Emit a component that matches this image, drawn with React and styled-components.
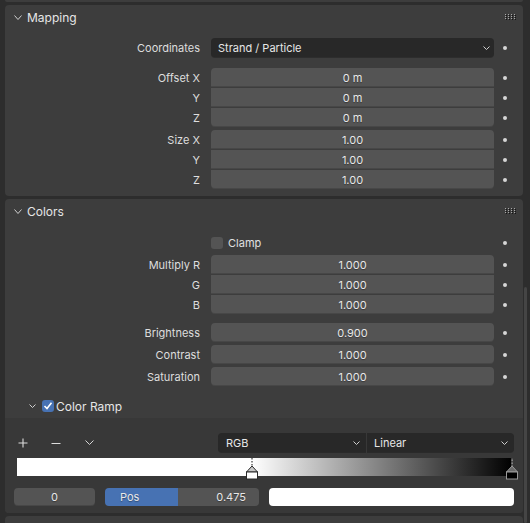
import React from "react";
import styled, { createGlobalStyle } from "styled-components";

const GlobalStyle = createGlobalStyle`
  html, body { margin: 0; padding: 0; }
  body {
    background: #2d2d2d;
    font-family: Inter, "DejaVu Sans", "Liberation Sans", sans-serif;
    font-size: 11px;
    color: #e2e2e2;
  }
  * { box-sizing: border-box; }
`;

const Editor = styled.div`
  position: relative;
  width: 530px;
  height: 523px;
  overflow: hidden;
  display: flex;
  flex-direction: column;
  gap: 3px;
  padding: 0 7px 0 5px;
  background: #2d2d2d;
`;

const PanelTail = styled.div`
  flex: none;
  height: 2px;
  background: #3d3d3d;
  border-radius: 0 0 4px 4px;
`;

const Panel = styled.section`
  flex: none;
  background: #3d3d3d;
  border-radius: 4px;
  overflow: hidden;
  padding-bottom: ${(p) => p.$padBottom ?? 0}px;
  min-height: ${(p) => p.$minH ?? 0}px;
`;

const PanelHeader = styled.header`
  height: 24px;
  display: flex;
  align-items: center;
  padding: 0 7px 0 9px;
  font-size: 12px;
  color: #e6e6e6;
`;

const HeaderTitle = styled.span`
  flex: 1;
  margin-left: 5px;
`;

const Row = styled.div`
  display: grid;
  grid-template-columns: 206px 283px 22px;
  align-items: center;
  height: 19px;
  margin-top: ${(p) => p.$mt || 0}px;
`;

const Label = styled.span`
  justify-self: end;
  padding-right: 11px;
  color: #dedede;
  white-space: nowrap;
`;

const radii = {
  single: "4px",
  first: "4px 4px 0 0",
  mid: "0",
  last: "0 0 4px 4px",
  left: "4px 0 0 4px",
  right: "0 4px 4px 0",
};

const NumField = styled.div`
  height: 19px;
  background: #545454;
  border-radius: ${(p) => radii[p.$pos || "single"]};
  display: flex;
  align-items: center;
  justify-content: center;
  color: #e8e8e8;
  box-shadow: inset 0 -1px 0 rgba(0, 0, 0, 0.15);
  text-shadow: 0 1px 1px rgba(0, 0, 0, 0.35);
`;

const Dropdown = styled.div`
  height: 19px;
  background: #282828;
  border-radius: ${(p) => radii[p.$pos || "single"]};
  display: flex;
  align-items: center;
  justify-content: space-between;
  padding: 0 ${(p) => p.$padR ?? 4}px 0 ${(p) => p.$padL ?? 7}px;
  color: #e6e6e6;
  flex: ${(p) => (p.$grow ? 1 : "none")};
  box-shadow: 0 1px 0 rgba(0, 0, 0, 0.25);
`;

const Dot = styled.span`
  justify-self: center;
  width: 4px;
  height: 4px;
  border-radius: 50%;
  background: #d6d6d6;
`;

const CheckLine = styled.label`
  display: flex;
  align-items: center;
  gap: 5px;
  color: #e0e0e0;
`;

const CheckBox = styled.span`
  width: 12px;
  height: 12px;
  border-radius: 3px;
  background: ${(p) => (p.$on ? "#4772b3" : "#545454")};
  display: flex;
  align-items: center;
  justify-content: center;
  flex: none;
`;

const SubHeader = styled.div`
  height: 24px;
  margin-top: 8px;
  display: flex;
  align-items: center;
  padding-left: 24px;
  gap: 6px;
  color: #e6e6e6;
  font-size: 12px;
`;

const SubTitle = styled.span`
  margin-left: -4px;
`;

const RampBody = styled.div`
  background: #383838;
  padding: 15px 9px 7px 9px;
`;

const ButtonRow = styled.div`
  display: flex;
  align-items: center;
  height: 19px;
`;

const IconButtons = styled.div`
  display: flex;
  gap: 15px;
  flex: 1;
`;

const IconBtn = styled.span`
  width: 18px;
  height: 19px;
  display: flex;
  align-items: center;
  justify-content: center;
`;

const DropGroup = styled.div`
  display: flex;
  width: 296px;
  gap: 1px;
`;

const RampBar = styled.div`
  position: relative;
  height: 18px;
  margin: 6px 2px 0 3px;
`;

const Marker = styled.svg`
  position: absolute;
  top: 0;
  width: 12px;
  height: 22px;
  overflow: visible;
`;

const BottomRow = styled.div`
  display: grid;
  grid-template-columns: 81px 154px 1fr;
  column-gap: 10px;
  margin-top: 12px;
  height: 18px;
`;

const Slider = styled.div`
  height: 18px;
  border-radius: 4px;
  display: flex;
  align-items: center;
  justify-content: space-between;
  padding: 0 13px 0 15px;
  color: #e8e8e8;
  text-shadow: 0 1px 1px rgba(0, 0, 0, 0.35);
`;

const Swatch = styled.div`
  height: 18px;
  border-radius: 4px;
  background: #ffffff;
`;

const Scrollbar = styled.div`
  position: absolute;
  right: 3px;
  top: 287px;
  bottom: 0;
  width: 3px;
  border-radius: 2px;
  background: #454545;
`;

const Chevron = ({ w = 8, h = 5, color = "#cfcfcf" }) => (
  <svg width={w} height={h} viewBox={`0 0 ${w} ${h}`}>
    <polyline
      points={`0.5,0.5 ${w / 2},${h - 0.5} ${w - 0.5},0.5`}
      fill="none"
      stroke={color}
      strokeWidth="1"
    />
  </svg>
);

const DragHandle = () => (
  <svg width="11" height="6" viewBox="0 0 11 6">
    {[0, 3, 6, 9].map((x) =>
      [0, 2, 4].map((y) => (
        <g key={`${x}-${y}`}>
          <rect x={x} y={y} width="1" height="1" fill="#a8a8a8" />
          <rect x={x + 1} y={y + 1} width="1" height="1" fill="#151515" />
        </g>
      ))
    )}
  </svg>
);

const Check = () => (
  <svg width="10" height="10" viewBox="0 0 10 10">
    <polyline points="1.5,5 4,7.5 8.5,1.8" fill="none" stroke="#fff" strokeWidth="1.6" />
  </svg>
);

const PanelHead = ({ title }) => (
  <PanelHeader>
    <Chevron />
    <HeaderTitle>{title}</HeaderTitle>
    <DragHandle />
  </PanelHeader>
);

const FieldRow = ({ label, value, pos, mt }) => (
  <Row $mt={mt}>
    <Label>{label}</Label>
    <NumField $pos={pos}>{value}</NumField>
    <Dot />
  </Row>
);

const RampMarker = ({ pos, active }) => (
  <Marker style={{ left: `calc(${pos * 100}% - 6px)` }} viewBox="0 0 12 22">
    <line x1="6" y1="0" x2="6" y2="8" stroke={active ? "#ffffff" : "#cfcfcf"} strokeWidth="1" />
    <line x1="6" y1="0" x2="6" y2="8" stroke="#111" strokeWidth="1" strokeDasharray="1.5 1.5" />
    <polygon
      points="6,8 0.5,14 11.5,14"
      fill={active ? "#c8c8c8" : "#6a6a6a"}
      stroke={active ? "#2a2a2a" : "#9a9a9a"}
      strokeWidth="1"
    />
    <rect
      x="0.5"
      y="14"
      width="11"
      height="7"
      fill={active ? "#ffffff" : "#000000"}
      stroke={active ? "#2a2a2a" : "#9a9a9a"}
      strokeWidth="1"
    />
  </Marker>
);

export default function App() {
  const stopPos = 0.475;
  const pct = stopPos * 100;
  return (
    <>
      <GlobalStyle />
      <Editor>
        <PanelTail />

        <Panel $padBottom={7}>
          <PanelHead title="Mapping" />
          <Row $mt={9}>
            <Label>Coordinates</Label>
            <Dropdown>
              <span>Strand / Particle</span>
              <Chevron w={7} h={4} />
            </Dropdown>
            <Dot />
          </Row>
          <FieldRow label="Offset X" value="0 m" pos="first" mt={11} />
          <FieldRow label="Y" value="0 m" pos="mid" mt={1} />
          <FieldRow label="Z" value="0 m" pos="last" mt={1} />
          <FieldRow label="Size X" value="1.00" pos="first" mt={3} />
          <FieldRow label="Y" value="1.00" pos="mid" mt={1} />
          <FieldRow label="Z" value="1.00" pos="last" mt={1} />
        </Panel>

        <Panel>
          <PanelHead title="Colors" />
          <Row $mt={10}>
            <span />
            <CheckLine>
              <CheckBox />
              Clamp
            </CheckLine>
            <Dot />
          </Row>
          <FieldRow label="Multiply R" value="1.000" pos="first" mt={3} />
          <FieldRow label="G" value="1.000" pos="mid" mt={1} />
          <FieldRow label="B" value="1.000" pos="last" mt={1} />
          <FieldRow label="Brightness" value="0.900" mt={9} />
          <FieldRow label="Contrast" value="1.000" mt={3} />
          <FieldRow label="Saturation" value="1.000" mt={3} />

          <SubHeader>
            <Chevron w={7} h={4} />
            <CheckBox $on>
              <Check />
            </CheckBox>
            <SubTitle>Color Ramp</SubTitle>
          </SubHeader>

          <RampBody>
            <ButtonRow>
              <IconButtons>
                <IconBtn>
                  <svg width="10" height="10" viewBox="0 0 10 10">
                    <path d="M5 0.5V9.5M0.5 5H9.5" stroke="#dcdcdc" strokeWidth="1.1" />
                  </svg>
                </IconBtn>
                <IconBtn>
                  <svg width="10" height="10" viewBox="0 0 10 10">
                    <path d="M0.5 5.5H9.5" stroke="#dcdcdc" strokeWidth="1.1" />
                  </svg>
                </IconBtn>
                <IconBtn>
                  <Chevron w={9} h={5} color="#d6d6d6" />
                </IconBtn>
              </IconButtons>
              <DropGroup>
                <Dropdown $pos="left" $grow $padL={8} $padR={6}>
                  <span>RGB</span>
                  <Chevron w={7} h={4} />
                </Dropdown>
                <Dropdown $pos="right" $grow $padL={7} $padR={6}>
                  <span>Linear</span>
                  <Chevron w={7} h={4} />
                </Dropdown>
              </DropGroup>
            </ButtonRow>

            <RampBar
              style={{
                background: `linear-gradient(to right, #ffffff 0%, #ffffff ${pct}%, #000000 100%)`,
              }}
            >
              <RampMarker pos={stopPos} active />
              <RampMarker pos={1} />
            </RampBar>

            <BottomRow>
              <NumField style={{ height: 18 }}>0</NumField>
              <Slider
                style={{
                  background: `linear-gradient(to right, #4772b3 ${pct}%, #545454 ${pct}%)`,
                }}
              >
                <span>Pos</span>
                <span>0.475</span>
              </Slider>
              <Swatch />
            </BottomRow>
          </RampBody>
        </Panel>

        <Panel $minH={10} />
        <Scrollbar />
      </Editor>
    </>
  );
}
